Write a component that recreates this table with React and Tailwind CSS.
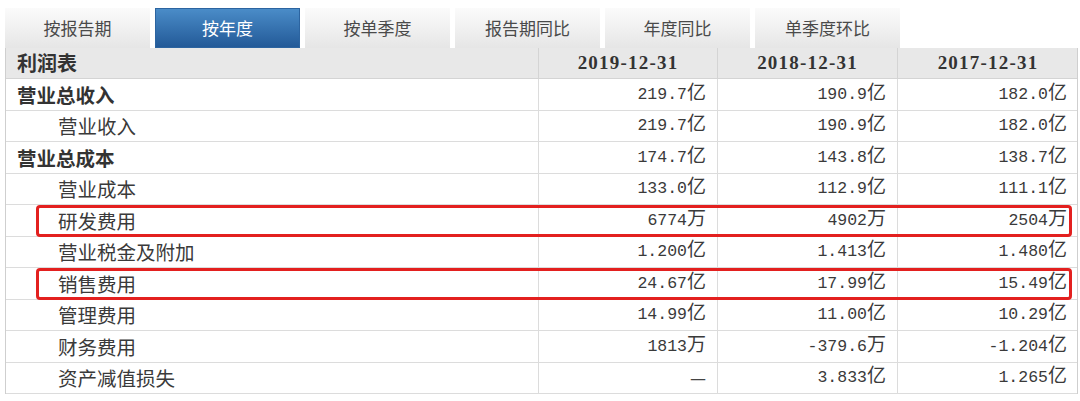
import React from 'react';

const tabs = ['按报告期', '按年度', '按单季度', '报告期同比', '年度同比', '单季度环比'];

const rows = [
  { label: '营业总收入', bold: true, vals: ['219.7|亿', '190.9|亿', '182.0|亿'] },
  { label: '营业收入', vals: ['219.7|亿', '190.9|亿', '182.0|亿'] },
  { label: '营业总成本', bold: true, vals: ['174.7|亿', '143.8|亿', '138.7|亿'] },
  { label: '营业成本', vals: ['133.0|亿', '112.9|亿', '111.1|亿'] },
  { label: '研发费用', vals: ['6774|万', '4902|万', '2504|万'], mark: true },
  { label: '营业税金及附加', vals: ['1.200|亿', '1.413|亿', '1.480|亿'] },
  { label: '销售费用', vals: ['24.67|亿', '17.99|亿', '15.49|亿'], mark: true },
  { label: '管理费用', vals: ['14.99|亿', '11.00|亿', '10.29|亿'] },
  { label: '财务费用', vals: ['1813|万', '-379.6|万', '-1.204|亿'] },
  { label: '资产减值损失', vals: ['—|', '3.833|亿', '1.265|亿'] },
];

const cjk = "font-['Noto_Sans_CJK_SC',sans-serif]";

const Value = ({ v }) => {
  const [num, unit] = v.split('|');
  if (num === '—') {
    return <span className={`${cjk} text-[18px] text-[#444]`}>—</span>;
  }
  return (
    <span className="flex items-baseline text-[#3a3a3a]">
      <span className="font-['Liberation_Mono',monospace] text-[16.5px]">{num}</span>
      <span className={`${cjk} text-[19px] leading-none`}>{unit}</span>
    </span>
  );
};

export default function App() {
  return (
    <div className="h-[401px] w-[1080px] overflow-hidden bg-white">
      {/* tab strip */}
      <div className="ml-[5px] flex gap-[5px] pt-[8px]">
        {tabs.map((t, i) => (
          <div
            key={t}
            className={
              i === 1
                ? `${cjk} flex h-[40px] w-[145px] items-center justify-center border border-[#2c64a0] bg-gradient-to-b from-[#4a8cc8] to-[#235a98] text-[17px] text-white`
                : `${cjk} flex h-[40px] w-[145px] items-center justify-center bg-gradient-to-b from-[#fbfbfb] to-[#e6e6e6] text-[17px] text-[#4a4a4a]`
            }
          >
            {t}
          </div>
        ))}
      </div>

      {/* table */}
      <div className="ml-[5px] w-[1073px] border-l border-r border-[#cfcfcf]">
        <div className="grid h-[31px] grid-cols-[532px_179px_180px_181px] border-b border-[#d4d4d4] bg-[#e8e8e8]">
          <div className={`${cjk} flex items-center pl-[11px] text-[20px] font-bold text-[#333]`}>利润表</div>
          {['2019-12-31', '2018-12-31', '2017-12-31'].map((d) => (
            <div
              key={d}
              className="flex items-center justify-center border-l border-[#d4d4d4] font-['Liberation_Serif',serif] text-[19px] font-bold tracking-[1.2px] text-[#333]"
            >
              {d}
            </div>
          ))}
        </div>

        {rows.map((r) => (
          <div
            key={r.label}
            className="relative grid h-[31.5px] grid-cols-[532px_179px_180px_181px] border-b border-[#dcdcdc]"
          >
            <div
              className={
                r.bold
                  ? `${cjk} flex items-center pl-[11px] text-[19.5px] font-bold text-[#333]`
                  : `${cjk} flex items-center pl-[52px] text-[19.5px] text-[#3a3a3a]`
              }
            >
              {r.label}
            </div>
            {r.vals.map((v, i) => (
              <div key={i} className="flex items-center justify-end border-l border-[#dcdcdc] pr-[11px]">
                <Value v={v} />
              </div>
            ))}
            {r.mark && (
              <div className="pointer-events-none absolute top-[0px] bottom-[-1px] left-[30px] w-[1036px] rounded-[4px] border-[3px] border-[#e3201f]" />
            )}
          </div>
        ))}
      </div>
    </div>
  );
}
